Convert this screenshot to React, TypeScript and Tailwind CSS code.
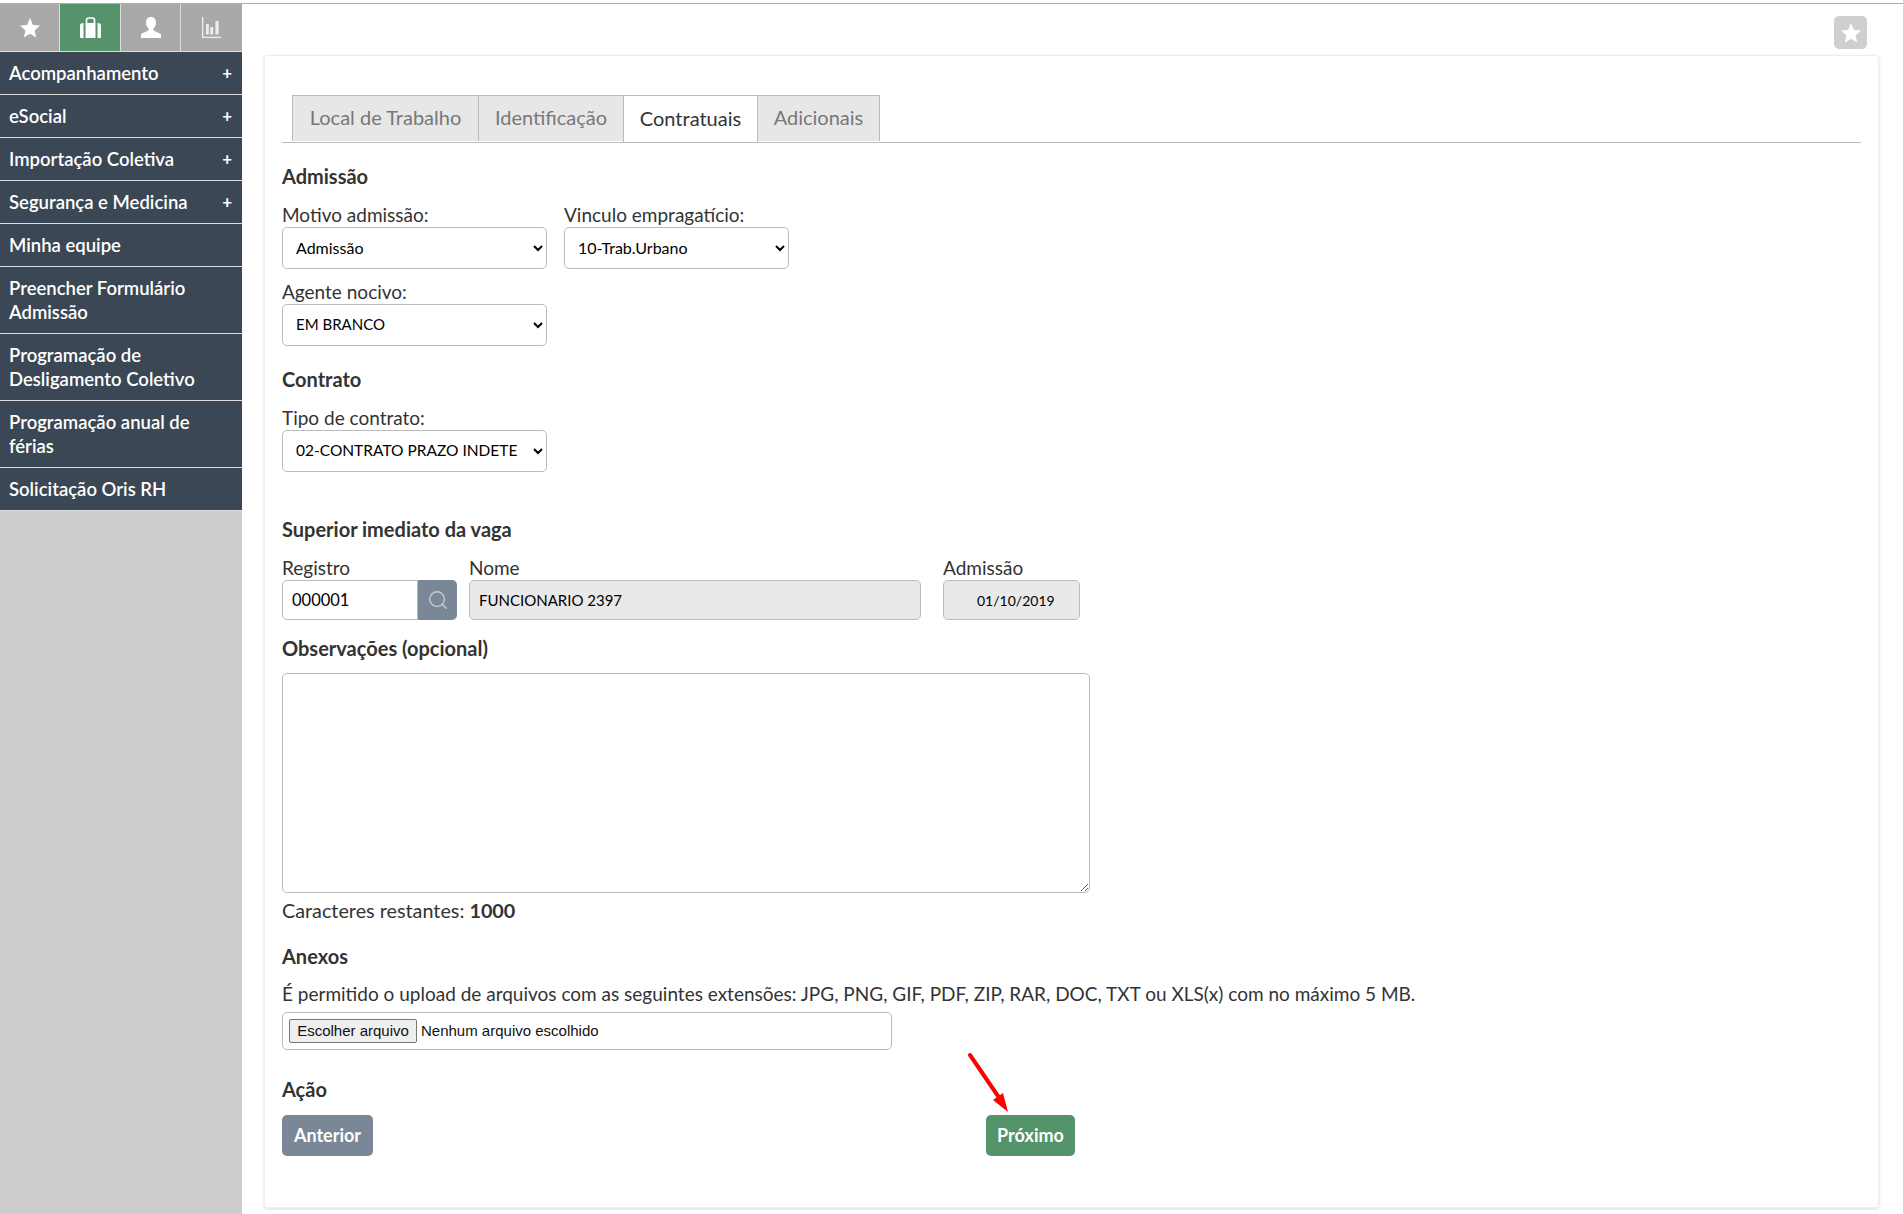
import { Search } from "lucide-react";

const menuItems = [
  { label: "Acompanhamento", plus: true },
  { label: "eSocial", plus: true },
  { label: "Importação Coletiva", plus: true },
  { label: "Segurança e Medicina", plus: true },
  { label: "Minha equipe" },
  { label: "Preencher Formulário Admissão" },
  { label: "Programação de Desligamento Coletivo" },
  { label: "Programação anual de férias" },
  { label: "Solicitação Oris RH" },
];

const tabs = [
  { label: "Local de Trabalho", width: "w-[187px]" },
  { label: "Identificação", width: "w-[146px]" },
  { label: "Contratuais", width: "w-[135px]", active: true },
  { label: "Adicionais", width: "w-[123px]" },
];

const StarIcon = () => (
  <svg width="20" height="20" viewBox="0 0 20 20" fill="currentColor">
    <polygon points="10,0 12.9,6.9 20,7.6 14.6,12.4 16.2,19.6 10,15.8 3.8,19.6 5.4,12.4 0,7.6 7.1,6.9" />
  </svg>
);

const CaseIcon = () => (
  <svg width="21" height="21" viewBox="0 0 21 21" fill="currentColor">
    <path d="M0 8.5C0 7 1 6 3.5 6v15H1a1 1 0 0 1-1-1z" />
    <path d="M21 8.5C21 7 20 6 17.5 6v15H20a1 1 0 0 0 1-1z" />
    <rect x="5.5" y="6" width="10" height="15" />
    <path d="M6.5 6V3a2 2 0 0 1 2-2h4a2 2 0 0 1 2 2v3" fill="none" stroke="currentColor" strokeWidth="1.7" />
  </svg>
);

const PersonIcon = () => (
  <svg width="20" height="21" viewBox="0 0 20 21" fill="currentColor">
    <path d="M10 0C7 0 5 2.2 5 5.5c0 2.5 1 4.5 2.5 6v2L0 17v4h20v-4l-7.5-3.5v-2C14 10 15 8 15 5.5 15 2.2 13 0 10 0z" />
  </svg>
);

const ChartIcon = () => (
  <svg width="19" height="21" viewBox="0 0 19 21" fill="currentColor" className="opacity-80">
    <rect x="0" y="0" width="1.3" height="21" />
    <rect x="0" y="19.7" width="19" height="1.3" />
    <rect x="4" y="7" width="2.8" height="10.5" />
    <rect x="8.2" y="10" width="3" height="7.5" />
    <rect x="13.4" y="4" width="3.2" height="13.5" />
  </svg>
);

const Heading = ({ children, className = "" }: { children: React.ReactNode; className?: string }) => (
  <h3 className={`h-[24px] text-[20px] leading-[22px] font-bold text-[#333] ${className}`}>{children}</h3>
);

const Label = ({ children }: { children: React.ReactNode }) => (
  <label className="block text-[19px] leading-[24px] text-[#333]">{children}</label>
);

const Select = ({ value, width, size = "text-[16px]" }: { value: string; width: string; size?: string }) => (
  <select
    defaultValue={value}
    className={`${width} ${size} h-[42px] rounded-[5px] border border-[#bbb] bg-white pr-[7px] pb-[2px] pl-[9px] text-black`}
  >
    <option>{value}</option>
  </select>
);

export default function App() {
  return (
    <div className="flex h-[1214px] w-[1903px] overflow-hidden bg-white font-['Lato','Liberation_Sans',sans-serif]">
      {/* Sidebar */}
      <aside className="mt-[3px] w-[242px] shrink-0 border-t border-[#aaa] bg-[#cdcdcd]">
        <div className="flex h-[48px] gap-px border-b border-[#ddd] bg-[#ddd] text-white">
          <div className="flex w-[59px] items-center justify-center bg-[#a9a9a9]">
            <StarIcon />
          </div>
          <div className="flex w-[60px] items-center justify-center bg-[#55936a]">
            <CaseIcon />
          </div>
          <div className="flex w-[59px] items-center justify-center bg-[#a9a9a9]">
            <PersonIcon />
          </div>
          <div className="flex flex-1 items-center justify-center bg-[#a9a9a9]">
            <ChartIcon />
          </div>
        </div>
        {menuItems.map((item) => (
          <div
            key={item.label}
            className="flex min-h-[43px] items-center justify-between border-b border-[#ddd] bg-[#3b4754] py-[9px] pr-[10px] pl-[9px] text-[18.5px] leading-[24px] font-semibold text-white"
          >
            <span className="max-w-[205px]">{item.label}</span>
            {item.plus && <span className="text-[17px] font-bold">+</span>}
          </div>
        ))}
      </aside>

      {/* Content */}
      <main className="relative mt-[3px] flex-1 border-t border-[#aaa] pr-[24px] pl-[22px]">
        <div className="flex justify-end pt-[12px]">
          <div className="mr-[12px] flex h-[33px] w-[33px] items-center justify-center rounded-[5px] bg-[#cfcfcf] text-white">
            <StarIcon />
          </div>
        </div>

        <div className="mt-[6px] h-[1153px] rounded-[3px] border border-[#eee] pt-[39px] pr-[17px] pl-[17px] shadow-[0_1px_3px_rgba(0,0,0,0.15)]">
          {/* Tabs */}
          <div className="flex h-[48px] border-b border-[#bbb] pl-[10px]">
            {tabs.map((tab) => (
              <div
                key={tab.label}
                className={`${tab.width} -mr-px flex items-center justify-center border-x border-t border-[#bbb] pb-[3px] text-[20px] ${
                  tab.active ? "h-[47px] bg-white text-[#333]" : "h-[46px] bg-[#e7e7e7] text-[#777]"
                }`}
              >
                {tab.label}
              </div>
            ))}
          </div>

          <Heading className="mt-[22px]">Admissão</Heading>

          <div className="mt-[14px] flex gap-[17px]">
            <div>
              <Label>Motivo admissão:</Label>
              <Select value="Admissão" width="w-[265px]" />
            </div>
            <div>
              <Label>Vinculo empragatício:</Label>
              <Select value="10-Trab.Urbano" width="w-[225px]" />
            </div>
          </div>

          <div className="mt-[11px]">
            <Label>Agente nocivo:</Label>
            <Select value="EM BRANCO" width="w-[265px]" size="text-[15px]" />
          </div>

          <Heading className="mt-[22px]">Contrato</Heading>

          <div className="mt-[14px]">
            <Label>Tipo de contrato:</Label>
            <Select value="02-CONTRATO PRAZO INDETE" width="w-[265px]" size="text-[15.5px]" />
          </div>

          <Heading className="mt-[46px]">Superior imediato da vaga</Heading>

          <div className="mt-[14px] flex">
            <div>
              <Label>Registro</Label>
              <div className="flex">
                <div className="flex h-[40px] w-[136px] items-center rounded-l-[5px] border border-[#bbb] pl-[9px] text-[16.5px] text-black">
                  000001
                </div>
                <div className="flex h-[40px] w-[39px] items-center justify-center rounded-r-[5px] bg-[#798796] text-[#c5ccd3]">
                  <Search size={22} strokeWidth={1.5} />
                </div>
              </div>
            </div>
            <div className="ml-[12px]">
              <Label>Nome</Label>
              <div className="flex h-[40px] w-[452px] items-center rounded-[5px] border border-[#bbb] bg-[#e9e9e9] pl-[9px] text-[15px] text-black">
                FUNCIONARIO 2397
              </div>
            </div>
            <div className="ml-[22px]">
              <Label>Admissão</Label>
              <div className="flex h-[40px] w-[137px] items-center rounded-[5px] border border-[#bbb] bg-[#e9e9e9] pl-[33px] text-[14px] text-black">
                01/10/2019
              </div>
            </div>
          </div>

          <Heading className="mt-[17px]">Observações (opcional)</Heading>

          <textarea className="mt-[12px] block h-[220px] w-[808px] rounded-[5px] border border-[#bbb]" />

          <p className="mt-[5px] text-[19.8px] leading-[24px] text-[#333]">
            Caracteres restantes: <b className="font-bold">1000</b>
          </p>

          <Heading className="mt-[23px]">Anexos</Heading>

          <p className="mt-[13px] text-[19px] leading-[24px] text-[#333]">
            É permitido o upload de arquivos com as seguintes extensões: JPG, PNG, GIF, PDF, ZIP, RAR, DOC, TXT ou XLS(x) com no máximo 5 MB.
          </p>

          <div className="mt-[6px] flex h-[38px] w-[610px] items-center rounded-[5px] border border-[#bbb] pl-[6px] font-['Liberation_Sans',sans-serif] text-[15px] text-[#111]">
            <span className="flex h-[24px] w-[128px] items-center justify-center rounded-[2px] border border-[#767676] bg-[#efefef] pt-px">
              Escolher arquivo
            </span>
            <span className="ml-[4px]">Nenhum arquivo escolhido</span>
          </div>

          <Heading className="mt-[28px]">Ação</Heading>

          <div className="mt-[13px] flex">
            <button className="h-[41px] w-[91px] rounded-[5px] bg-[#798796] text-[18px] font-bold text-white">
              Anterior
            </button>
            <button className="ml-[613px] h-[41px] w-[89px] rounded-[5px] bg-[#55936a] text-[18px] font-bold text-white">
              Próximo
            </button>
          </div>
        </div>

        {/* Red arrow annotation */}
        <svg className="absolute top-[1048px] left-[725px]" width="46" height="64" viewBox="0 0 46 64">
          <path d="M3 3 L33 47" stroke="#ff0000" strokeWidth="4" strokeLinecap="round" fill="none" />
          <path d="M41 60 L26 48 L36 41 Z" fill="#ff0000" />
        </svg>
      </main>
    </div>
  );
}
